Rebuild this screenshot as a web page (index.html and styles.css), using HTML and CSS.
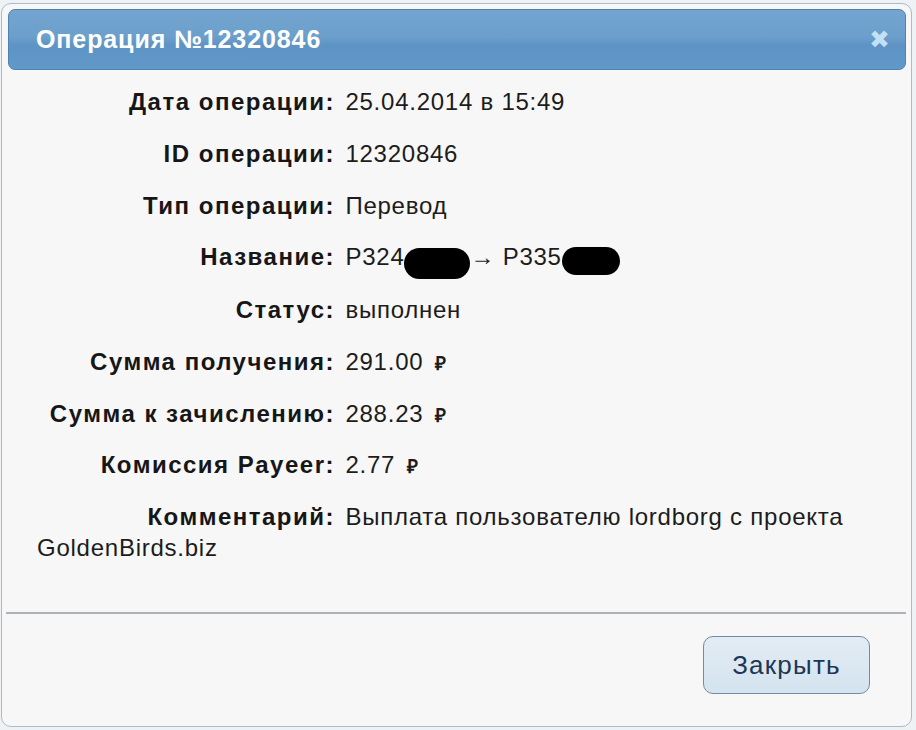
FILE: index.html
```html
<!DOCTYPE html>
<html lang="ru">
<head>
<meta charset="utf-8">
<link rel="stylesheet" href="styles.css">
</head>
<body>
<div class="dialog">
  <div class="titlebar">
    <span class="title">Операция №12320846</span>
    <span class="close">✖</span>
  </div>
  <div class="content">
    <div class="row"><span class="label">Дата операции:</span> <span class="value">25.04.2014 в 15:49</span></div>
    <div class="row"><span class="label">ID операции:</span> <span class="value">12320846</span></div>
    <div class="row"><span class="label">Тип операции:</span> <span class="value">Перевод</span></div>
    <div class="row"><span class="label">Название:</span> <span class="value">P324<span class="blot blot1"></span>→ P335<span class="blot blot2"></span></span></div>
    <div class="row"><span class="label">Статус:</span> <span class="value">выполнен</span></div>
    <div class="row"><span class="label">Сумма получения:</span> <span class="value">291.00 <span class="rub">₽</span></span></div>
    <div class="row"><span class="label">Сумма к зачислению:</span> <span class="value">288.23 <span class="rub">₽</span></span></div>
    <div class="row"><span class="label">Комиссия Payeer:</span> <span class="value">2.77 <span class="rub">₽</span></span></div>
    <div class="row"><span class="label">Комментарий:</span> <span class="value">Выплата пользователю lordborg с проекта GoldenBirds.biz</span></div>
  </div>
  <div class="footer">
    <button class="btn">Закрыть</button>
  </div>
</div>
</body>
</html>
```
FILE: styles.css
```css
html, body {
  margin: 0;
  padding: 0;
}
body {
  width: 916px;
  height: 730px;
  background: #eef2f5;
  font-family: "Liberation Sans", Arial, sans-serif;
  overflow: hidden;
}
.dialog {
  box-sizing: border-box;
  margin: 3px 0 0 1px;
  width: 911px;
  height: 724px;
  border: 1px solid #a9bccb;
  border-radius: 10px;
  background: #f7f7f7;
  padding: 5px 5px 0 6px;
  display: flex;
  flex-direction: column;
}
.titlebar {
  box-sizing: border-box;
  height: 61px;
  border: 1px solid #4f83b1;
  border-radius: 7px;
  background: linear-gradient(180deg, #74a5d0 0%, #6c9fcc 45%, #5d94c5 60%, #6099c9 100%);
  display: flex;
  align-items: center;
  justify-content: space-between;
  padding: 0 15px 0 27px;
}
.title {
  color: #ffffff;
  font-weight: bold;
  font-size: 25px;
  letter-spacing: 0.9px;
}
.close {
  color: #c4e0f5;
  font-size: 25px;
  line-height: 1;
  text-shadow: 0 0 1px #5a8cb8;
}
.content {
  flex: 1;
  padding: 16px 30px 0 29px;
  font-size: 24px;
  color: #1a1a1a;
  line-height: 31px;
}
.row {
  margin-bottom: 20.75px;
  letter-spacing: 0.75px;
}
.label {
  display: inline-block;
  width: 298px;
  margin-right: 3px;
  text-align: right;
  font-weight: bold;
  color: #161616;
  letter-spacing: 1.5px;
}
.value {
  color: #1c1c1c;
}
.rub {
  font-size: 19px;
  font-weight: bold;
  margin-left: 4px;
  line-height: 0;
}
.blot {
  display: inline-block;
  background: #000;
  border-radius: 16px;
  vertical-align: -8px;
  margin: -6px 0;
}
.blot1 {
  width: 66px;
  height: 31px;
}
.blot2 {
  width: 58px;
  height: 28px;
  vertical-align: -4px;
}
.footer {
  border-top: 2px solid #a9b3b9;
  margin: 0 0 0 -2px;
  height: 114px;
  box-sizing: border-box;
  display: flex;
  justify-content: flex-end;
  padding: 22px 36px 0 0;
}
.btn {
  width: 167px;
  height: 58px;
  border: 1px solid #6f8ca4;
  border-radius: 10px;
  background: linear-gradient(180deg, #e3ecf4 0%, #d4e3ef 100%);
  color: #1c3755;
  font-family: "Liberation Sans", Arial, sans-serif;
  font-size: 26px;
  letter-spacing: 1.2px;
}
```
